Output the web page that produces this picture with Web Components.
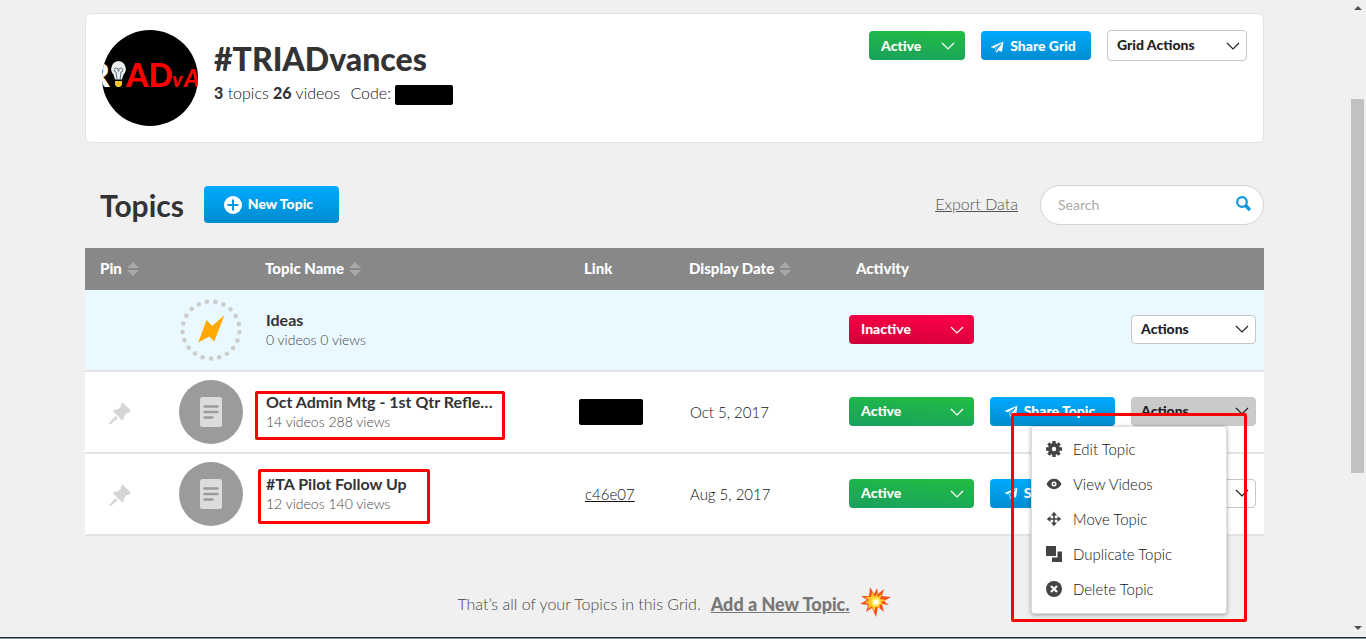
<!DOCTYPE html>
<html lang="en">
<head>
<meta charset="utf-8">
<title>#TRIADvances - Topics</title>
<style>
html, body { margin: 0; }
body { background: #f0f0f0; color: #333; font-family: Lato, "Liberation Sans", sans-serif; font-size: 16px; }
</style>
</head>
<body>
<grid-page></grid-page>
<script>
const ICONS = {
  chevron: '<svg viewBox="0 0 14 8" width="14" height="8" fill="none" stroke="currentColor" stroke-width="1.2"><path d="M1 1l6 6 6-6"/></svg>',
  plane: '<svg viewBox="0 0 14 12" width="14" height="12" fill="currentColor"><path d="M13.500.5L.5 6l3.300 1.200L10 3.500zM13.500.5L12 10.800 8.500 9.400 6.500 12 5.800 8.200zM13.500.5L5 7.800l.6 3z" fill-rule="nonzero"/><path d="M4.200 7.600L11 3 6 8.200l-.4 3" fill="none" stroke="#009be8" stroke-width=".7"/></svg>',
  plus: '<svg viewBox="0 0 18 18" width="18" height="18"><circle cx="9" cy="9" r="9" fill="#fff"/><path d="M9 3.500v11M3.500 9h11" stroke="#0095dd" stroke-width="2"/></svg>',
  sort: '<svg viewBox="0 0 12 14" width="12" height="14" fill="#a9a9a9"><path d="M6 0l6 6H0zM0 8h12l-6 6z"/></svg>',
  search: '<svg viewBox="0 0 16 16" width="16" height="16" fill="none" stroke="#0a97e6"><circle cx="6" cy="6" r="4.800" stroke-width="2.200"/><path d="M9.500 9.500l4.500 4.500" stroke-width="3.200"/></svg>',
  pin: '<svg viewBox="0 0 24 24" width="24" height="24" fill="#d6d6d6"><path d="M14.600 2.600L22.800 10.600 21.400 12.600 18.800 13 16 16.200 15.600 20 14 20.200 5.200 11.600 5.800 9.800 10 9.200 13 6.400 12.800 4.200zM7.600 16l2.200 2.200-7.200 6L.8 23.400z"/></svg>',
  bolt: '<svg viewBox="0 0 64 64" width="64" height="64"><circle cx="32" cy="32" r="28.500" transform="rotate(90 32 32)" fill="none" stroke="#ccc" stroke-width="4.600" stroke-linecap="round" stroke-dasharray="0 8.527"/><path d="M27.600 22l5.600 6L45.500 17 35.200 43.400l-5-4.900L19.300 44.400z" fill="#ffa800"/></svg>',
  doc: '<svg viewBox="0 0 64 64" width="64" height="64"><circle cx="32" cy="32" r="32" fill="#9b9b9b"/><rect x="21" y="17" width="22" height="30" rx="2.500" fill="#dcdcdc"/><path d="M25.500 26.500h13M25.500 32h13M25.500 37.500h8" stroke="#9b9b9b" stroke-width="2.400" stroke-linecap="round"/></svg>',
  gear: '<svg viewBox="0 0 16 16" width="16" height="16"><g stroke="#444" stroke-width="3.400"><path d="M8 0v16M0 8h16M2.400 2.400l11.200 11.200M13.600 2.400L2.400 13.600"/></g><circle cx="8" cy="8" r="6" fill="#444"/><circle cx="8" cy="8" r="2.200" fill="#fff"/></svg>',
  eye: '<svg viewBox="0 0 16 16" width="16" height="16"><path d="M.5 8C2.200 4.600 4.800 2.800 8 2.800S13.800 4.600 15.500 8C13.800 11.400 11.200 13.200 8 13.200S2.200 11.400.5 8z" fill="#444"/><circle cx="8" cy="8" r="2.500" fill="#fff"/><circle cx="8" cy="8" r="1.100" fill="#444"/></svg>',
  move: '<svg viewBox="0 0 16 16" width="16" height="16"><path d="M8 3v10M3 8h10" stroke="#444" stroke-width="1.600"/><path d="M8 .8l3 3.600H5zM8 15.200l3-3.600H5zM.8 8l3.600-3v6zM15.200 8l-3.600-3v6z" fill="#444"/></svg>',
  copy: '<svg viewBox="0 0 16 16" width="16" height="16" fill="#444"><path d="M0 0h10v10H0zM11.500 5.500H16V16H6v-4.500h5.500z"/></svg>',
  remove: '<svg viewBox="0 0 16 16" width="16" height="16"><circle cx="8" cy="8" r="8" fill="#444"/><path d="M5 5l6 6M11 5l-6 6" stroke="#fff" stroke-width="2.200"/></svg>',
  burst: '<svg viewBox="0 0 32 32" width="32" height="32"><path d="M10 1l4 7 3-6 1 6 6-5-2 7 9 1-7 4 5 4-7-1 2 8-6-5-2 10-4-9-6 4 2-7-8-1 7-4-6-4 8 0z" fill="#f4511e"/><path d="M12 6l3 5 2-4 1 4 4-3-2 5 6 1-5 2 3 3-5-1 1 5-4-3-2 6-2-6-4 3 1-5-4-1 4-3-4-3 6 0z" fill="#ffc928"/><circle cx="16" cy="16" r="4.500" fill="#ffee58"/><circle cx="16" cy="16" r="2.500" fill="#fff"/></svg>'
};

const define = (name, render) => customElements.define(name, class extends HTMLElement {
  connectedCallback() {
    if (this.shadowRoot) return;
    const template = document.createElement('template');
    template.innerHTML = '<style>*{box-sizing:border-box} svg{display:block}</style>' + render(this);
    this.attachShadow({ mode: 'open' }).append(template.content.cloneNode(true));
  }
});

define('app-icon', el => `
  <style>:host{display:inline-block;flex:none;vertical-align:middle}</style>${ICONS[el.getAttribute('name')]}`);

define('status-select', el => {
  const value = el.getAttribute('value');
  const other = value === 'Active' ? 'Inactive' : 'Active';
  return `
  <style>
    :host{display:block;width:125px;position:relative;color:#fff}
    select{display:block;width:100%;height:29px;margin:0;padding:0 12px;border:0;border-radius:4px;appearance:none;
      font:900 14px/28px Lato,sans-serif;color:#fff;background:linear-gradient(5deg,#1aa05e,#22bd43)}
    select.Inactive{background:linear-gradient(5deg,#d00039,#ff0048)}
    option{color:#333}
    app-icon{position:absolute;right:10px;top:11px;pointer-events:none}
  </style>
  <select class="${value}" aria-label="Status"><option>${value}</option><option>${other}</option></select>
  <app-icon name="chevron"></app-icon>`;
});

define('primary-button', () => `
  <style>
    :host{display:block;width:125px}
    button{display:flex;width:100%;height:var(--button-height,29px);align-items:center;justify-content:center;gap:6px;padding:0 6px 0 0;
      border:0;border-radius:4px;color:#fff;font:900 14px/20px Lato,sans-serif;background:linear-gradient(#00aaff,#008ccf)}
    slot[name=icon]{display:block}
  </style>
  <button type="button"><slot name="icon"></slot><slot></slot></button>`);

define('actions-button', el => `
  <style>
    :host{display:block;width:125px;position:relative}
    button{display:flex;width:100%;height:var(--button-height,29px);align-items:center;justify-content:space-between;padding:0 6px 0 9px;
      border:1px solid #c6c6c6;border-radius:4px;background:#fff;color:#222;font:900 14px/20px Lato,sans-serif}
    button slot{display:block;padding-bottom:var(--label-lift,0)}
    :host([open]) button{background:#cacaca}
    :host([open]){z-index:5}
  </style>
  <button type="button" aria-haspopup="menu" aria-expanded="${el.hasAttribute('open')}"><slot></slot><app-icon name="chevron"></app-icon></button>
  <slot name="menu"></slot>`);

define('topic-menu', () => `
  <style>
    :host{position:absolute;right:29px;top:29px;width:196px;background:#fff;border:1px solid #ddd;border-radius:3px;
      box-shadow:0 1px 4px rgba(0,0,0,.35)}
    ul{list-style:none;margin:0;padding:5px 0 6px}
    button{display:flex;width:100%;height:35px;align-items:center;gap:11px;border:0;background:none;padding:0 14px;
      color:#111;font:300 15px/20px Lato,sans-serif}
  </style>
  <ul>${[['gear','Edit Topic'],['eye','View Videos'],['move','Move Topic'],['copy','Duplicate Topic'],['remove','Delete Topic']]
    .map(([icon, label]) => `<li><button type="button"><app-icon name="${icon}"></app-icon>${label}</button></li>`).join('')}</ul>`);

define('call-out', () => `
  <style>:host{position:absolute;border:3px solid #f00;border-radius:2px;pointer-events:none}</style>`);

define('black-out', () => `<style>:host{display:inline-block;background:#000;border-radius:2px;vertical-align:middle}</style>`);

define('grid-avatar', () => `
  <style>:host{display:block;flex:none;width:96px;height:96px;border-radius:50%;overflow:hidden;background:#000}
  text{font-family:Lato,sans-serif;font-weight:900}</style>
  <svg viewBox="0 0 96 96" width="96" height="96">
    <text x="-13" y="57" font-size="32" fill="#fff">R</text>
    <path d="M16.500 31a8 8 0 0 1 5 13.500l-1.500 5h-7l-1.500-5a8 8 0 0 1 5-13.500z" fill="#eee"/>
    <path d="M15 50l-1-8a2 2 0 1 1 2-1h1a2 2 0 1 1 2 1l-1 8" fill="none" stroke="#5a6e8a" stroke-width="1"/>
    <path d="M13 51h7v4l-2 2h-3l-2-2z" fill="#f4c430"/>
    <text x="24" y="57" font-size="32" fill="#f00">AD</text>
    <text x="70" y="57" font-size="21" font-style="italic" fill="#f00">v</text>
    <text x="82" y="57" font-size="24" font-style="italic" fill="#f00">A</text>
  </svg>`);

define('grid-header', () => `
  <style>
    :host{display:flex;gap:16px;min-height:130px;padding:16px;background:#fff;border:1px solid #e2e2e2;border-radius:6px}
    .info{flex:1;padding-top:9px}
    h1{margin:0;font-size:32px;line-height:40px;font-weight:900}
    p{margin:3px 0 0;font-size:16px;line-height:22px;font-weight:300;color:#111}
    b{font-weight:900;color:#333}
    .code{margin-left:6px}
    black-out{width:58px;height:20px}
    .actions{display:flex;gap:16px;align-items:center;align-self:flex-start}
    status-select{width:96px} primary-button{width:110px} actions-button{width:140px;--button-height:31px;--label-lift:2px}
  </style>
  <grid-avatar></grid-avatar>
  <div class="info">
    <h1>#TRIADvances</h1>
    <p><b>3</b> topics <b>26</b> videos <span class="code">Code:</span> <black-out></black-out></p>
  </div>
  <div class="actions">
    <status-select value="Active"></status-select>
    <primary-button><app-icon slot="icon" name="plane"></app-icon>Share Grid</primary-button>
    <actions-button>Grid Actions</actions-button>
  </div>`);

define('topics-toolbar', () => `
  <style>
    :host{display:flex;align-items:center;margin:42px 0 23px;padding-left:15px}
    h2{margin:0 20px 0 0;font-size:30px;line-height:40px;font-weight:700}
    primary-button{width:135px;--button-height:37px;padding-bottom:2px}
    a{margin-left:auto;padding-bottom:4px;color:#555;font-size:16px;font-weight:300}
    label{display:flex;align-items:center;width:224px;height:40px;margin-left:22px;padding:0 11px 2px 17px;background:#fff;
      border:1px solid #d3d3d3;border-radius:20px}
    input{flex:1;min-width:0;border:0;padding:0;outline:0;background:none;font:14px Lato,sans-serif}
    input::placeholder{color:#aaa;opacity:1}
  </style>
  <h2>Topics</h2>
  <primary-button><app-icon slot="icon" name="plus"></app-icon>New Topic</primary-button>
  <a href="#export">Export Data</a>
  <label><input type="search" placeholder="Search" aria-label="Search"><app-icon name="search"></app-icon></label>`);

define('topics-table', () => `
  <style>
    :host{display:block}
    table{width:100%;table-layout:fixed;border-collapse:separate;border-spacing:0}
    th{height:42px;padding:0 0 2px;background:#888;color:#fff;text-align:left;font-size:15px;line-height:20px;font-weight:900}
    th app-icon{margin:-2px 0 0 5px}
    td{position:relative;height:82px;padding:0;background:#fff;border-bottom:2px solid #e4e4e4;color:#111;font-size:15px;font-weight:300}
    .ideas td{background:#eaf8ff}
    th:first-child{padding-left:15px}
    td:first-child{padding-left:23px}
    td:nth-child(3),td:nth-child(4),td:nth-child(5){padding-left:1px}
    td:nth-child(n+6){padding-bottom:2px}
    th.activity{padding-left:7px}
    .pin{width:94px}.thumb{width:86px}.link{width:105px}.date{width:160px}.status{width:141px}.share{width:141px}.act{width:133px}
    td app-icon{display:block}
    strong{display:block;width:236px;overflow:hidden;text-overflow:ellipsis;white-space:nowrap;color:#333;font-size:16px;line-height:20px;font-weight:700}
    small{display:block;color:#444;font-size:14px;line-height:20px}
    a{color:#111}
    black-out{width:64px;height:26px;margin-left:-6px}
    .first{left:-10px;top:19px;width:250px;height:49px}
    .second{left:-7px;top:15px;width:172px;height:55px}
    .third{left:-120px;top:16px;width:236px;height:209px}
  </style>
  <table>
    <colgroup><col class="pin"><col class="thumb"><col><col class="link"><col class="date"><col class="status"><col class="share"><col class="act"></colgroup>
    <thead><tr><th>Pin<app-icon name="sort"></app-icon></th><th></th><th>Topic Name<app-icon name="sort"></app-icon></th><th>Link</th>
      <th>Display Date<app-icon name="sort"></app-icon></th><th class="activity">Activity</th><th></th><th></th></tr></thead>
    <tbody>
      <tr class="ideas"><td></td><td><app-icon name="bolt"></app-icon></td><td><strong>Ideas</strong><small>0 videos 0 views</small></td><td></td><td></td>
        <td><status-select value="Inactive"></status-select></td><td></td><td><actions-button>Actions</actions-button></td></tr>
      <tr><td><app-icon name="pin"></app-icon></td><td><app-icon name="doc"></app-icon></td>
        <td><strong>Oct Admin Mtg - 1st Qtr Refle…</strong><small>14 videos 288 views</small><call-out class="first"></call-out></td>
        <td><black-out></black-out></td><td>Oct 5, 2017</td><td><status-select value="Active"></status-select></td>
        <td><primary-button><app-icon slot="icon" name="plane"></app-icon>Share Topic</primary-button></td>
        <td><actions-button open>Actions<topic-menu slot="menu"></topic-menu><call-out slot="menu" class="third"></call-out></actions-button></td></tr>
      <tr><td><app-icon name="pin"></app-icon></td><td><app-icon name="doc"></app-icon></td>
        <td><strong>#TA Pilot Follow Up</strong><small>12 videos 140 views</small><call-out class="second"></call-out></td>
        <td><a href="#c46e07">c46e07</a></td><td>Aug 5, 2017</td><td><status-select value="Active"></status-select></td>
        <td><primary-button><app-icon slot="icon" name="plane"></app-icon>Share Topic</primary-button></td>
        <td><actions-button>Actions</actions-button></td></tr>
    </tbody>
  </table>`);

define('list-end', () => `
  <style>
    :host{display:flex;align-items:center;justify-content:center;gap:10px;margin-top:50px;color:#444;font-size:16px;line-height:36px;font-weight:300}
    a{color:#777;font-size:18px;font-weight:900}
    app-icon{padding-bottom:4px}
  </style>
  <span>That’s all of your Topics in this Grid.</span><a href="#new">Add a New Topic.</a><app-icon name="burst"></app-icon>`);

define('scroll-rail', () => `
  <style>
    :host{display:grid;grid-template-rows:99fr 374fr 164fr;width:17px;padding:0 2px;justify-items:center}
    i{width:0;height:0;border:4px solid transparent}
    .up{margin-top:2px;border-bottom-color:#505050}
    .down{align-self:end;margin-bottom:3px;border-top-color:#505050}
    b{width:13px;background:#c1c1c1}
  </style><i class="up"></i><b></b><i class="down"></i>`);

define('grid-page', () => `
  <style>
    :host{display:grid;grid-template-columns:1fr auto;grid-template-rows:1fr auto;min-height:100vh}
    main{min-width:0;padding:13px 85px 0}
    footer{grid-column:1/-1;height:2px;background:#7d929a;border-top:1px solid #20313a}
  </style>
  <main><grid-header></grid-header><topics-toolbar></topics-toolbar><topics-table></topics-table><list-end></list-end></main>
  <scroll-rail></scroll-rail>
  <footer></footer>`);
</script>
</body>
</html>
